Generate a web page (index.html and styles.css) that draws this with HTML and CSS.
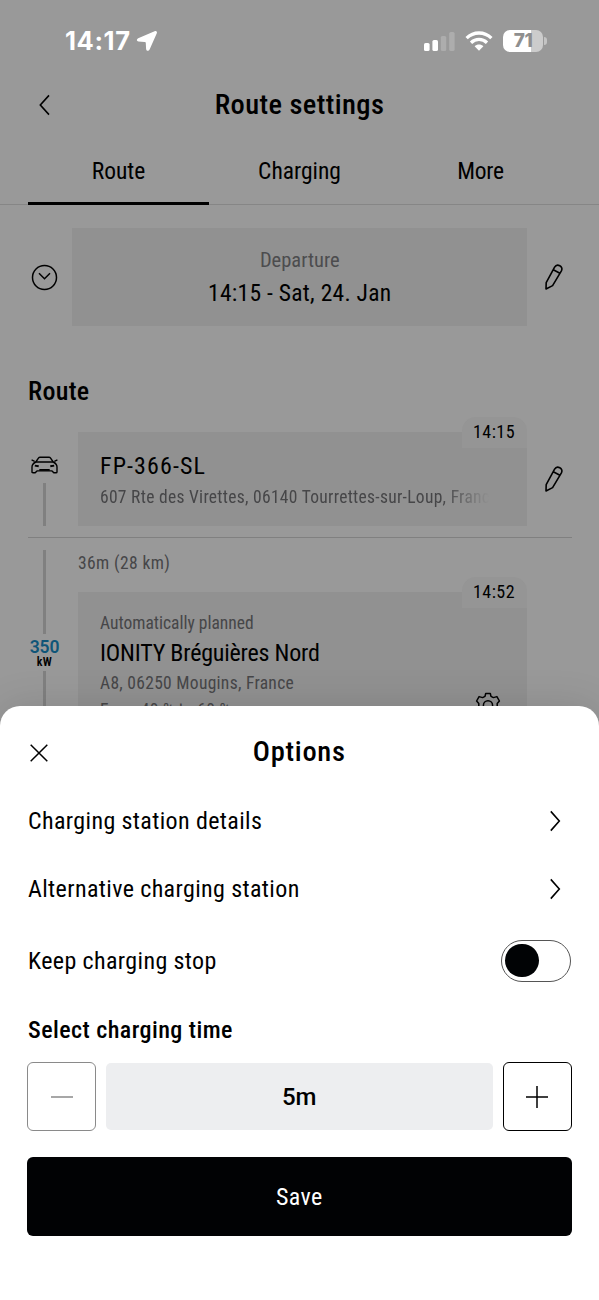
FILE: index.html
```
<!DOCTYPE html>
<html lang="en">
<head>
<meta charset="utf-8">
<title>Route settings</title>
<link rel="stylesheet" href="styles.css">
</head>
<body>
<main class="screen">
  <div class="status">
    <div class="status-left">
      <span class="clock">14:17</span>
      <svg class="loc" width="22" height="22" viewBox="0 0 22 22"><path d="M18.6 1.2 L2.2 8.3 C.3 9.3 .6 11.3 2.5 11.5 L8.6 12 C9.4 12 9.8 12.4 9.8 13.2 L10.1 18.9 C10.4 21.2 12.7 21.4 13.6 19.6 L20.8 3.3 C21.5 1.6 20.2 .5 18.6 1.2Z" fill="#fff"/></svg>
    </div>
    <div class="status-right">
      <svg width="31" height="20" viewBox="0 0 31 20"><rect x="0" y="12" width="5.6" height="8" rx="1.6" fill="#fff"/><rect x="8.4" y="9" width="5.6" height="11" rx="1.6" fill="#fff"/><rect x="16.8" y="5" width="5.4" height="15" rx="1.6" fill="#adadad"/><rect x="25.2" y="1" width="5.4" height="19" rx="1.6" fill="#adadad"/></svg>
      <svg class="wifi" width="28" height="20" viewBox="0 0 28 20"><g fill="none" stroke="#fff" stroke-width="3.3"><path d="M1.6 7.1 C8.6 .3 19.4 .3 26.4 7.1"/><path d="M6 11.7 C10.6 7.3 17.4 7.3 22 11.7"/></g><path d="M14 19.7 L9.6 15.2 C12 13 16 13 18.4 15.2Z" fill="#fff"/></svg>
      <div class="battery"><span class="battery-body">71</span><i class="battery-tip"></i></div>
    </div>
  </div>

  <header class="topbar">
    <svg class="back" width="12" height="22" viewBox="0 0 12 22"><path d="M10 1.4 L1.3 11 L10 20.6" fill="none" stroke="#000" stroke-width="1.6"/></svg>
    <h1 class="title">Route settings</h1>
  </header>

  <nav class="tabs">
    <span class="tab active">Route</span>
    <span class="tab">Charging</span>
    <span class="tab more">More</span>
  </nav>

  <section class="row departure">
    <svg width="27" height="27" viewBox="0 0 27 27" fill="none" stroke="#000" stroke-width="1.5"><circle cx="13.5" cy="13.5" r="12"/><path d="M8 9.2 L13.5 14.8 L19 9.2"/></svg>
    <div class="card departure-card"><span class="label">Departure</span><span class="when">14:15 - Sat, 24. Jan</span></div>
    <svg class="pencil" width="20" height="28" viewBox="0 0 20 28" fill="none" stroke="#000" stroke-width="1.6" stroke-linejoin="round"><path d="M2 26 L2.2 19.6 L10.6 4.2 C13 -.1 19.8 3.4 17.4 7.9 L8.6 22.6 Z M9.3 6.8 L15.9 10.3"/></svg>
  </section>

  <h2 class="section-title">Route</h2>

  <section class="row stop first">
    <div class="rail">
      <svg width="27" height="18" viewBox="0 0 27 18" fill="none" stroke="#000" stroke-width="1.4" stroke-linejoin="round"><path d="M4.8 6 L7.6 1.9 Q8.1 1.2 9 1.2 H18 Q18.9 1.2 19.4 1.9 L22.2 6"/><path d="M4.8 6 H22.2 Q26 7.8 26 11 V15.9 Q26 16.8 25 16.8 H22.8 L21 14.9 H6 L4.2 16.8 H2 Q1 16.8 1 15.9 V11 Q1 7.8 4.8 6Z M.6 3.9 L3.6 5.3 M26.4 3.9 L23.4 5.3"/><path d="M3.8 9.6 L7.7 10.3 M23.2 9.6 L19.3 10.3 M8.3 13.9 H18.7" stroke-width="1.9"/></svg>
      <i class="line"></i>
    </div>
    <div class="card stop-card">
      <span class="time">14:15</span>
      <span class="name plate">FP-366-SL</span>
      <span class="sub address">607 Rte des Virettes, 06140 Tourrettes-sur-Loup, France</span>
    </div>
    <svg class="pencil" width="20" height="28" viewBox="0 0 20 28" fill="none" stroke="#000" stroke-width="1.6" stroke-linejoin="round"><path d="M2 26 L2.2 19.6 L10.6 4.2 C13 -.1 19.8 3.4 17.4 7.9 L8.6 22.6 Z M9.3 6.8 L15.9 10.3"/></svg>
  </section>

  <hr class="divider">

  <section class="row leg">
    <div class="rail leg-rail">
      <i class="line upper"></i>
      <span class="power">350</span><span class="unit">kW</span>
      <i class="line lower"></i>
    </div>
    <div class="leg-body">
      <span class="sub distance">36m (28 km)</span>
      <div class="card charge-card">
        <span class="time">14:52</span>
        <span class="sub auto">Automatically planned</span>
        <span class="name station">IONITY Bréguières Nord</span>
        <span class="sub place">A8, 06250 Mougins, France</span>
        <span class="sub range">From 40 % to 60 %</span>
        <svg class="gear" width="26" height="26" viewBox="0 0 26 26" fill="none" stroke="#000" stroke-width="1.5" stroke-linejoin="round"><path d="M10.7 1.5 H15.3 L16 4.4 L18.4 5.6 L21.9 4.6 L24.4 9 L22.2 11.5 V14.5 L24.4 17 L21.9 21.4 L18.4 20.4 L16 21.6 L15.3 24.5 H10.7 L10 21.6 L7.6 20.4 L4.1 21.4 L1.6 17 L3.8 14.5 V11.5 L1.6 9 L4.1 4.6 L7.6 5.6 L10 4.4Z"/><circle cx="13" cy="13.4" r="4.6"/></svg>
      </div>
    </div>
  </section>

  <section class="sheet">
    <header class="sheet-head">
      <svg class="close" width="18" height="18" viewBox="0 0 18 18"><path d="M.7 .7 L17.3 17.3 M17.3 .7 L.7 17.3" stroke="#000" stroke-width="1.5"/></svg>
      <h2 class="title options">Options</h2>
    </header>
    <div class="option"><span>Charging station details</span><svg class="chev" width="12" height="22" viewBox="0 0 12 22"><path d="M1.8 1.4 L10.3 11 L1.8 20.6" fill="none" stroke="#000" stroke-width="1.6"/></svg></div>
    <div class="option"><span>Alternative charging station</span><svg class="chev" width="12" height="22" viewBox="0 0 12 22"><path d="M1.8 1.4 L10.3 11 L1.8 20.6" fill="none" stroke="#000" stroke-width="1.6"/></svg></div>
    <div class="option keep"><span>Keep charging stop</span><span class="toggle"><i class="knob"></i></span></div>
    <h3 class="field-title">Select charging time</h3>
    <div class="stepper">
      <span class="step disabled"><svg width="24" height="24" viewBox="0 0 24 24"><path d="M1 12 H23" stroke="#8a8a8a" stroke-width="1.5"/></svg></span>
      <span class="value">5m</span>
      <span class="step"><svg width="24" height="24" viewBox="0 0 24 24"><path d="M1 12 H23 M12 1 V23" stroke="#000" stroke-width="1.5"/></svg></span>
    </div>
    <div class="save">Save</div>
  </section>
</main>
</body>
</html>
```
FILE: styles.css
```
* { box-sizing: border-box; margin: 0; padding: 0; }
body { background: #999; }
svg { display: block; flex: none; }

.screen {
  position: relative;
  width: 599px;
  height: 1300px;
  overflow: hidden;
  background: #999;
  color: #000;
  font-family: Roboto, "Liberation Sans", sans-serif;
  font-stretch: 75%;
  font-size: 24px;
  line-height: 32px;
  white-space: nowrap;
}

/* status bar */
.status { height: 80px; padding: 2px 52px 0 65px; display: flex; align-items: center; justify-content: space-between; }
.status-left, .status-right { display: flex; align-items: center; }
.clock { font: 700 25.5px/32px Inter, sans-serif; letter-spacing: .6px; color: #fff; }
.loc { margin-left: 5px; }
.wifi { margin-left: 10px; }
.battery { margin-left: 10px; display: flex; align-items: center; }
.battery-body {
  width: 40px; height: 22px; border-radius: 7px;
  background: linear-gradient(90deg, #fff 71%, #ccc 71%);
  color: #8f8f8f; font: 800 19px/22px Inter, sans-serif; text-align: center; letter-spacing: -.5px;
}
.battery-tip { width: 3px; height: 8px; margin-left: 1px; border-radius: 0 3px 3px 0; background: #c4c4c4; }

/* header and tabs */
.topbar { height: 48px; display: grid; grid-template-columns: 40px 1fr 40px; align-items: center; padding-top: 2px; }
.back { margin-left: 39px; }
.title { font-size: 28.5px; font-weight: 500; letter-spacing: .4px; text-align: center; line-height: 36px; }
.options { letter-spacing: .7px; }
.tabs { height: 77px; padding: 0 28px; display: grid; grid-template-columns: repeat(3, 1fr); border-bottom: 1px solid #868686; }
.tab { height: 77px; padding-top: 27px; text-align: center; font-size: 23.5px; border-bottom: 3px solid transparent; }
.tab.active { border-bottom-color: #000; }
.tab.more { letter-spacing: -.3px; }

/* rows */
.row { display: grid; grid-template-columns: 33px minmax(0, 1fr) 56px; padding: 0 16.5px 0 28px; align-items: center; }
.card { background: #919191; position: relative; display: flex; flex-direction: column; }
.pencil { justify-self: center; margin-right: 1px; }
.departure { margin-top: 23px; }
.departure > svg:first-child { margin-left: 3px; }
.departure-card { height: 98px; margin-left: 11px; padding: 16px 0 0 1px; align-items: center; }
.label { font-size: 20.5px; color: #4c4c4e; }
.when { font-size: 23.5px; line-height: 34px; letter-spacing: .28px; }
.section-title { margin: 49px 0 0 28px; font-size: 26px; line-height: 32px; font-weight: 500; letter-spacing: .3px; }

.stop { margin-top: 25px; }
.rail { align-self: stretch; display: flex; flex-direction: column; align-items: center; }
.first .rail { padding-top: 24px; }
.line { width: 3.5px; background: #808080; }
.first .line { margin-top: 9px; height: 43px; }
.stop-card, .charge-card { padding: 0 22px; margin-left: 17px; }
.stop-card { height: 94px; padding-top: 18px; padding-right: 38px; }
.time {
  position: absolute; right: 0; top: -15px; width: 65px; height: 31px;
  border-radius: 14px 14px 0 0; background: #959595;
  font-size: 18px; line-height: 29px; letter-spacing: .45px; text-align: center;
}
.name { font-size: 24px; line-height: 32px; }
.plate { letter-spacing: 1.1px; }
.sub { font-size: 17.5px; line-height: 30px; letter-spacing: .29px; color: #464648; }
.address { overflow: hidden; -webkit-mask-image: linear-gradient(90deg, #000 88%, transparent 100%); mask-image: linear-gradient(90deg, #000 88%, transparent 100%); }

.divider { margin: 11px 27px 0 28px; border: 0; height: 1px; background: #808080; }

.leg { align-items: start; }
.leg-rail { padding-top: 12px; }
.upper { height: 84px; }
.lower { height: 60px; margin-top: 3px; }
.power { margin-top: 5px; font-size: 17.5px; line-height: 17px; font-weight: 600; font-stretch: 100%; letter-spacing: -.1px; color: #0f5578; }
.unit { font-size: 12px; line-height: 12px; font-weight: 600; letter-spacing: .3px; }
.leg-body { padding-top: 10px; }
.distance { display: block; margin-left: 17px; letter-spacing: .4px; }
.charge-card { margin-top: 14px; height: 150px; padding-top: 16px; }
.auto { letter-spacing: 0; }
.station { line-height: 31px; letter-spacing: -.2px; }
.place { line-height: 29px; }
.range { line-height: 25px; }
.gear { position: absolute; right: 26px; top: 100px; }

/* bottom sheet */
.sheet {
  position: absolute; left: 0; right: 0; top: 706px; height: 594px;
  padding: 11px 27.5px 0 27px; background: #fff; border-radius: 20px 20px 0 0;
  box-shadow: 0 0 40px rgba(0, 0, 0, .12);
}
.sheet-head { height: 70px; display: grid; grid-template-columns: 18px 1fr 18px; align-items: center; }
.close { margin: 1px 0 0 3px; }
.option { height: 68px; padding-left: 1px; display: flex; align-items: center; justify-content: space-between; letter-spacing: .38px; }
.chev { margin-right: 11px; }
.keep { height: 75px; }
.toggle { width: 70px; height: 42px; margin-right: .5px; padding: 0 3px; border: 1.5px solid #555; border-radius: 21px; display: flex; align-items: center; }
.knob { width: 33.5px; height: 33.5px; border-radius: 50%; background: #010305; }
.field-title { margin: 16px 0 0 1px; font-size: 24px; line-height: 32px; font-weight: 500; letter-spacing: .44px; }
.stepper { margin-top: 16px; display: grid; grid-template-columns: 69px 1fr 69px; column-gap: 10px; align-items: center; }
.step { height: 69px; border: 1.5px solid #000; border-radius: 6px; display: grid; place-items: center; }
.step.disabled { border-color: #8a8a8a; }
.value { height: 67px; border-radius: 5px; background: #edeef0; text-align: center; line-height: 68px; font-weight: 500; font-stretch: 100%; }
.save { margin-top: 26px; height: 79px; border-radius: 6px; background: #010204; color: #fff; text-align: center; line-height: 80px; letter-spacing: .4px; }
```
